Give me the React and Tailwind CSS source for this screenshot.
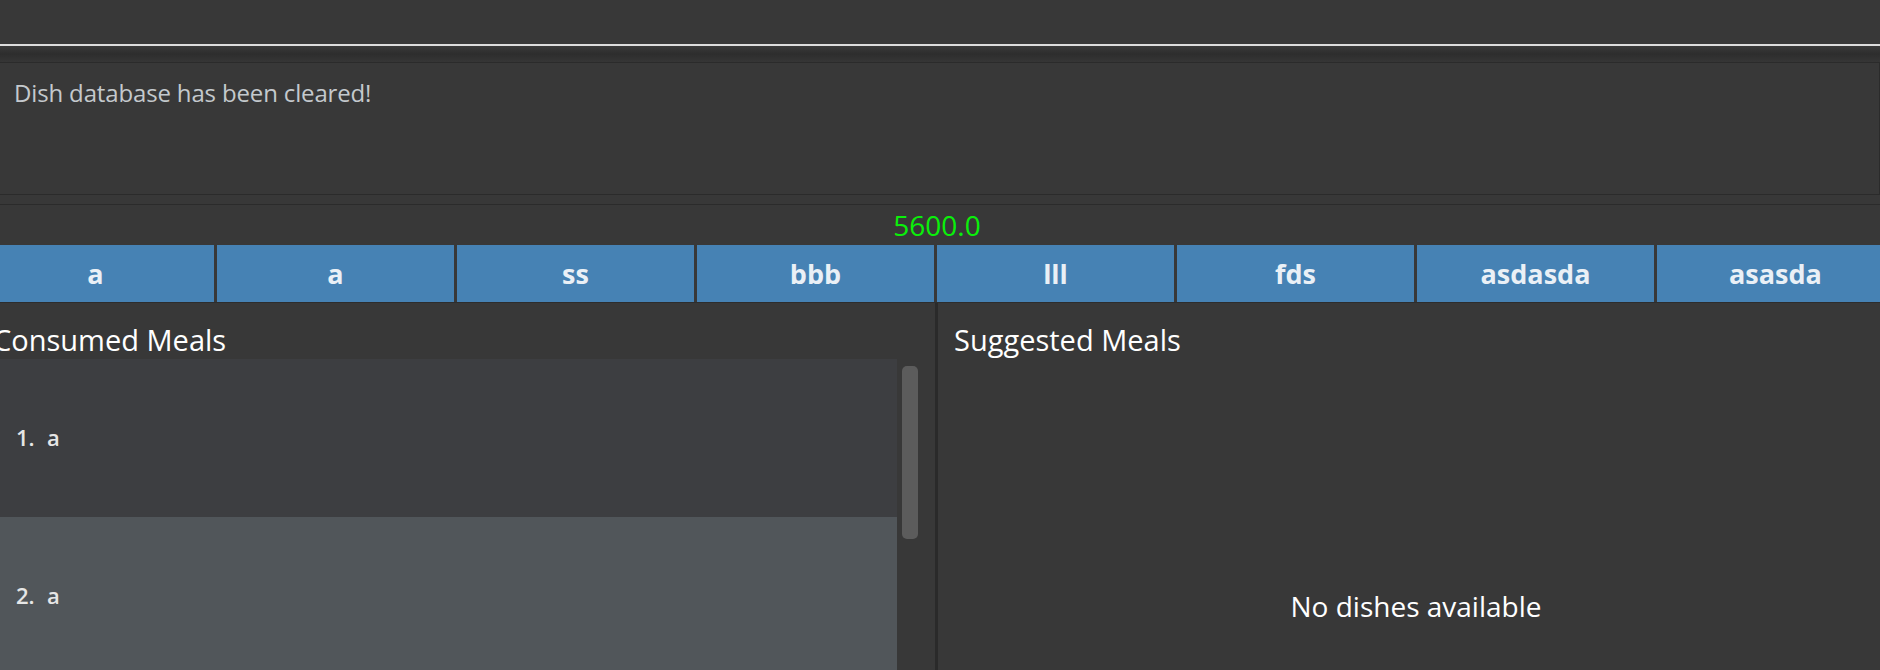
import React from 'react';

const dishes = ['a', 'a', 'ss', 'bbb', 'lll', 'fds', 'asdasda', 'asasda'];
const consumed = ['a', 'a'];

export default function App() {
  return (
    <div className="w-[1880px] h-[670px] overflow-hidden bg-[#383838] font-['Open_Sans','Noto_Sans',sans-serif]">
      {/* menu bar */}
      <div className="h-[44px] bg-[#383838]" />
      <div className="h-[2px] bg-[#dcdcdc]" />
      <div className="h-[17px] bg-gradient-to-b from-[#393939] via-[#2d2d2d] to-[#363636] border-b border-[#2b2b2b]" />

      {/* result display */}
      <div className="h-[132px] border-r border-b border-[#2b2b2b] px-[14px] pt-[12px]">
        <p className="text-[24px] tracking-[-0.15px] text-[#c4c9cd]">Dish database has been cleared!</p>
      </div>
      <div className="h-[10px] border-b border-[#2b2b2b]" />

      {/* calorie total */}
      <div className="h-[40px] flex items-end justify-center pb-[6px] pr-[6px]">
        <span className="text-[28px] leading-none text-[#0af00a]">5600.0</span>
      </div>

      {/* dish buttons */}
      <div className="ml-[-23px] w-[1917px] flex gap-[3px] border-b border-[#2d2d2d]">
        {dishes.map((d, i) => (
          <div
            key={i}
            className="w-[237px] h-[57px] shrink-0 bg-[#4682b4] flex items-center justify-center pt-[1px] text-[27px] font-bold text-[#eaf0f6]"
          >
            {d}
          </div>
        ))}
      </div>

      {/* meals */}
      <div className="ml-[-23px] w-[1917px] flex">
        <div className="w-[958px] shrink-0">
          <div className="h-[56px] flex items-end pl-[16px]">
            <span className="text-[29px] leading-[38px] text-white">Consumed Meals</span>
          </div>
          <div className="flex">
            <div className="w-[920px] shrink-0">
              {consumed.map((m, i) => (
                <div
                  key={i}
                  className={`h-[158px] flex items-center pl-[39px] pb-[2px] text-[22px] font-semibold text-[#e6e6e6] ${i % 2 === 0 ? 'bg-[#3d3e41]' : 'bg-[#51565a]'}`}
                >
                  <span className="w-[31px]">{i + 1}.</span>
                  <span>{m}</span>
                </div>
              ))}
            </div>
            <div className="w-[38px] shrink-0 pl-[5px] pt-[7px]">
              <div className="w-[16px] h-[173px] rounded-[5px] bg-[#5c5c5c]" />
            </div>
          </div>
        </div>
        <div className="w-[3px] shrink-0 bg-[#2a2a2a] h-[400px]" />
        <div className="flex-1 flex flex-col">
          <div className="h-[56px] flex items-end pl-[16px]">
            <span className="text-[29px] leading-[38px] text-white">Suggested Meals</span>
          </div>
          <div className="h-[268px] flex items-end justify-center">
            <span className="text-[28px] text-white">No dishes available</span>
          </div>
        </div>
      </div>
    </div>
  );
}
